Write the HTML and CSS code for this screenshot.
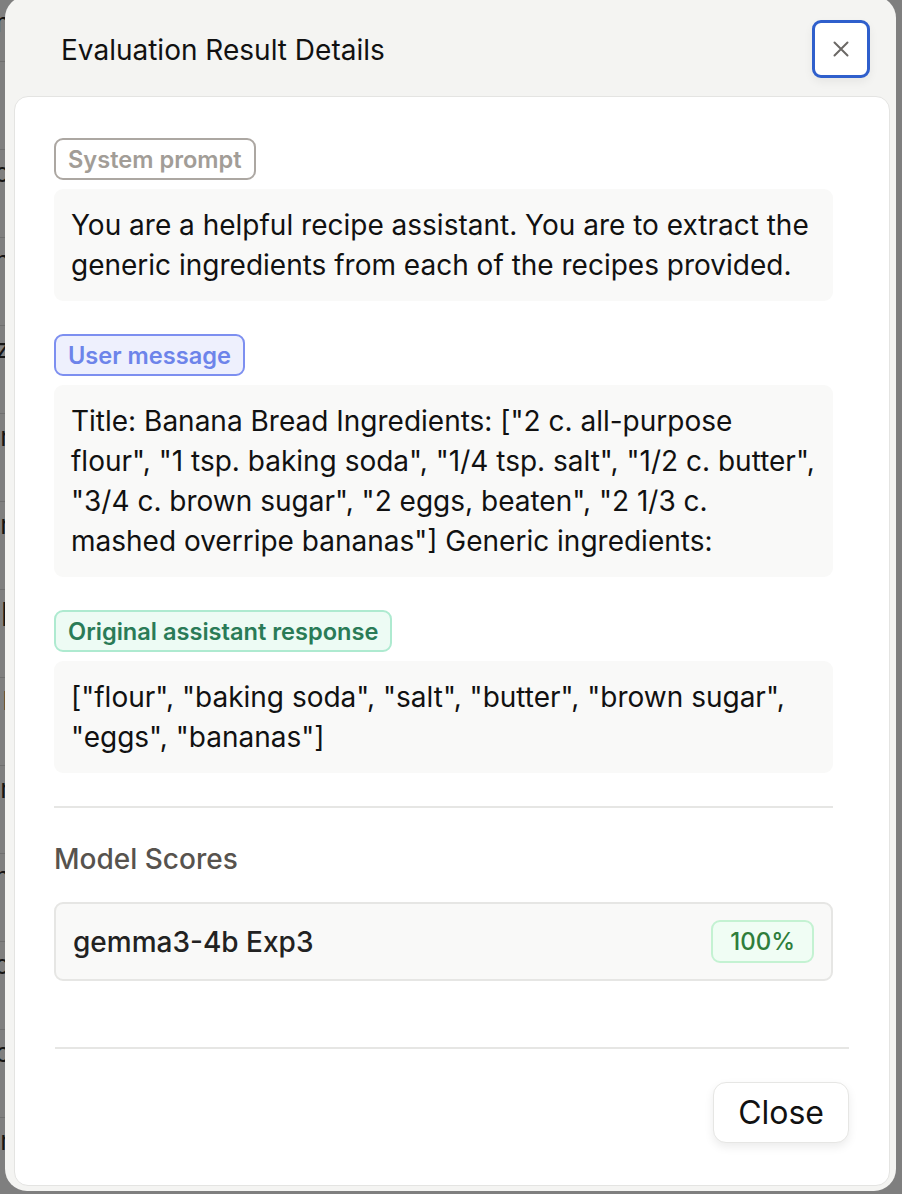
FILE: index.html
```html
<!DOCTYPE html>
<html>
<head>
<meta charset="utf-8">
<link rel="stylesheet" href="styles.css">
</head>
<body>
<div class="page">
  <div class="prow"><span>m</span></div>
  <div class="prow"><span>l</span></div>
  <div class="prow"><span>o</span></div>
  <div class="prow"><span>n</span></div>
  <div class="prow"><span>z</span></div>
  <div class="prow"><span>r</span></div>
  <div class="prow"><span>r</span></div>
  <div class="prow"><span>[</span></div>
  <div class="prow bold"><span>l</span></div>
  <div class="prow"><span>r</span></div>
  <div class="prow"><span>n</span></div>
  <div class="prow"><span>o</span></div>
  <div class="prow"><span>c</span></div>
  <div class="prow"><span>r</span></div>
</div>
<div class="modal">
  <div class="modal-header">
    <h2 class="title">Evaluation Result Details</h2>
    <button class="xbtn" aria-label="Close">
      <svg width="20" height="20" viewBox="0 0 20 20"><path d="M3.5 3.5 L16.5 16.5 M16.5 3.5 L3.5 16.5" stroke="#6b6865" stroke-width="2" stroke-linecap="round" fill="none"/></svg>
    </button>
  </div>
  <div class="card">
    <div class="body">
      <div class="section">
        <span class="badge badge-sys">System prompt</span>
        <div class="msg">You are a helpful recipe assistant. You are to extract the generic ingredients from each of the recipes provided.</div>
      </div>
      <div class="section">
        <span class="badge badge-user">User message</span>
        <div class="msg">Title: Banana Bread Ingredients: ["2 c. all-purpose flour", "1 tsp. baking soda", "1/4 tsp. salt", "1/2 c. butter", "3/4 c. brown sugar", "2 eggs, beaten", "2 1/3 c. mashed overripe bananas"] Generic ingredients:</div>
      </div>
      <div class="section">
        <span class="badge badge-asst">Original assistant response</span>
        <div class="msg">["flour", "baking soda", "salt", "butter", "brown sugar", "eggs", "bananas"]</div>
      </div>
      <hr class="divider">
      <h3 class="scores-title">Model Scores</h3>
      <div class="score-row">
        <span class="model">gemma3-4b Exp3</span>
        <span class="score">100%</span>
      </div>
    </div>
    <div class="footer">
      <button class="close-btn">Close</button>
    </div>
  </div>
</div>
</body>
</html>
```
FILE: styles.css
```css
* { box-sizing: border-box; }
html, body { margin: 0; padding: 0; }
body {
  width: 902px;
  height: 1194px;
  overflow: hidden;
  background: #7f7f7f;
  font-family: Inter, "Noto Sans", sans-serif;
  position: relative;
}
.page {
  display: flex;
  flex-direction: column;
}
.prow {
  height: 88px;
  border-bottom: 1px solid #6f6f6f;
  display: flex;
  justify-content: flex-end;
  width: 10px;
  overflow: hidden;
  font-size: 26px;
  color: #151515;
  line-height: 1;
  padding-top: 10px;
}
.prow:nth-child(1) { height: 62px; }
.prow.bold { font-weight: 700; }
.prow span { white-space: nowrap; }

.modal {
  position: absolute;
  left: 5px;
  top: -4px;
  width: 891px;
  height: 1195px;
  background: #f4f4f2;
  border-radius: 22px;
  display: flex;
  flex-direction: column;
  padding: 0 6px 5px 9px;
}
.modal-header {
  height: 100px;
  display: flex;
  align-items: center;
  justify-content: space-between;
  padding: 0 20px 0 47px;
  flex: none;
}
.title {
  margin: 0;
  font-size: 28px;
  font-weight: 400;
  color: #111;
  letter-spacing: 0;
  padding-top: 8px;
}
.xbtn {
  width: 58px;
  height: 58px;
  border: 3px solid #2f5fcc;
  border-radius: 9px;
  background: #fff;
  display: flex;
  align-items: center;
  justify-content: center;
  padding: 0;
  margin-top: 5px;
  box-shadow: 0 4px 10px rgba(0,0,0,0.06);
}
.card {
  flex: 1;
  background: #fff;
  border: 1px solid #e4e4e2;
  border-radius: 14px;
  display: flex;
  flex-direction: column;
}
.body {
  padding: 41px 56px 0 39px;
  flex: 1;
}
.section {
  display: flex;
  flex-direction: column;
  align-items: flex-start;
  gap: 9px;
  margin-bottom: 33px;
}
.badge {
  display: inline-flex;
  align-items: center;
  height: 42px;
  padding: 0 12px;
  border-radius: 9px;
  border: 2px solid;
  font-size: 23.6px;
  font-weight: 600;
}
.badge-sys { border-color: #aca7a2; color: #a29d97; background: #fff; }
.badge-user { border-color: #7d8ff0; color: #6d84ea; background: #eef0fd; }
.badge-asst { border-color: #aeead0; color: #2a7b57; background: #edfbf4; }
.msg {
  align-self: stretch;
  background: #f9f9f8;
  border-radius: 9px;
  padding: 16px 17px;
  font-size: 28px;
  line-height: 40px;
  color: #111;
}
.divider {
  border: none;
  border-top: 2px solid #e6e6e4;
  margin: 0;
}
.scores-title {
  margin: 36px 0 28px;
  font-size: 28px;
  font-weight: 500;
  color: #57534e;
  line-height: 30px;
}
.score-row {
  height: 79px;
  background: #f9f9f8;
  border: 2px solid #e6e6e4;
  border-radius: 9px;
  display: flex;
  align-items: center;
  justify-content: space-between;
  padding: 0 17px 0 17px;
}
.model {
  font-size: 28px;
  font-weight: 500;
  color: #222;
}
.score {
  height: 43px;
  padding: 0 17px;
  display: inline-flex;
  align-items: center;
  background: #f0fdf4;
  border: 2px solid #c4f2d2;
  border-radius: 9px;
  color: #2f7d3b;
  font-size: 24px;
  font-weight: 500;
}
.footer {
  margin: 0 40px;
  border-top: 2px solid #e6e6e4;
  padding: 33px 0 42px;
  display: flex;
  justify-content: flex-end;
}
.close-btn {
  height: 61px;
  padding: 0 24px;
  background: #fff;
  border: 1px solid #e6e6e4;
  border-radius: 13px;
  font-family: Inter, sans-serif;
  font-size: 32px;
  color: #111;
  box-shadow: 0 4px 10px rgba(0,0,0,0.08);
}
```
